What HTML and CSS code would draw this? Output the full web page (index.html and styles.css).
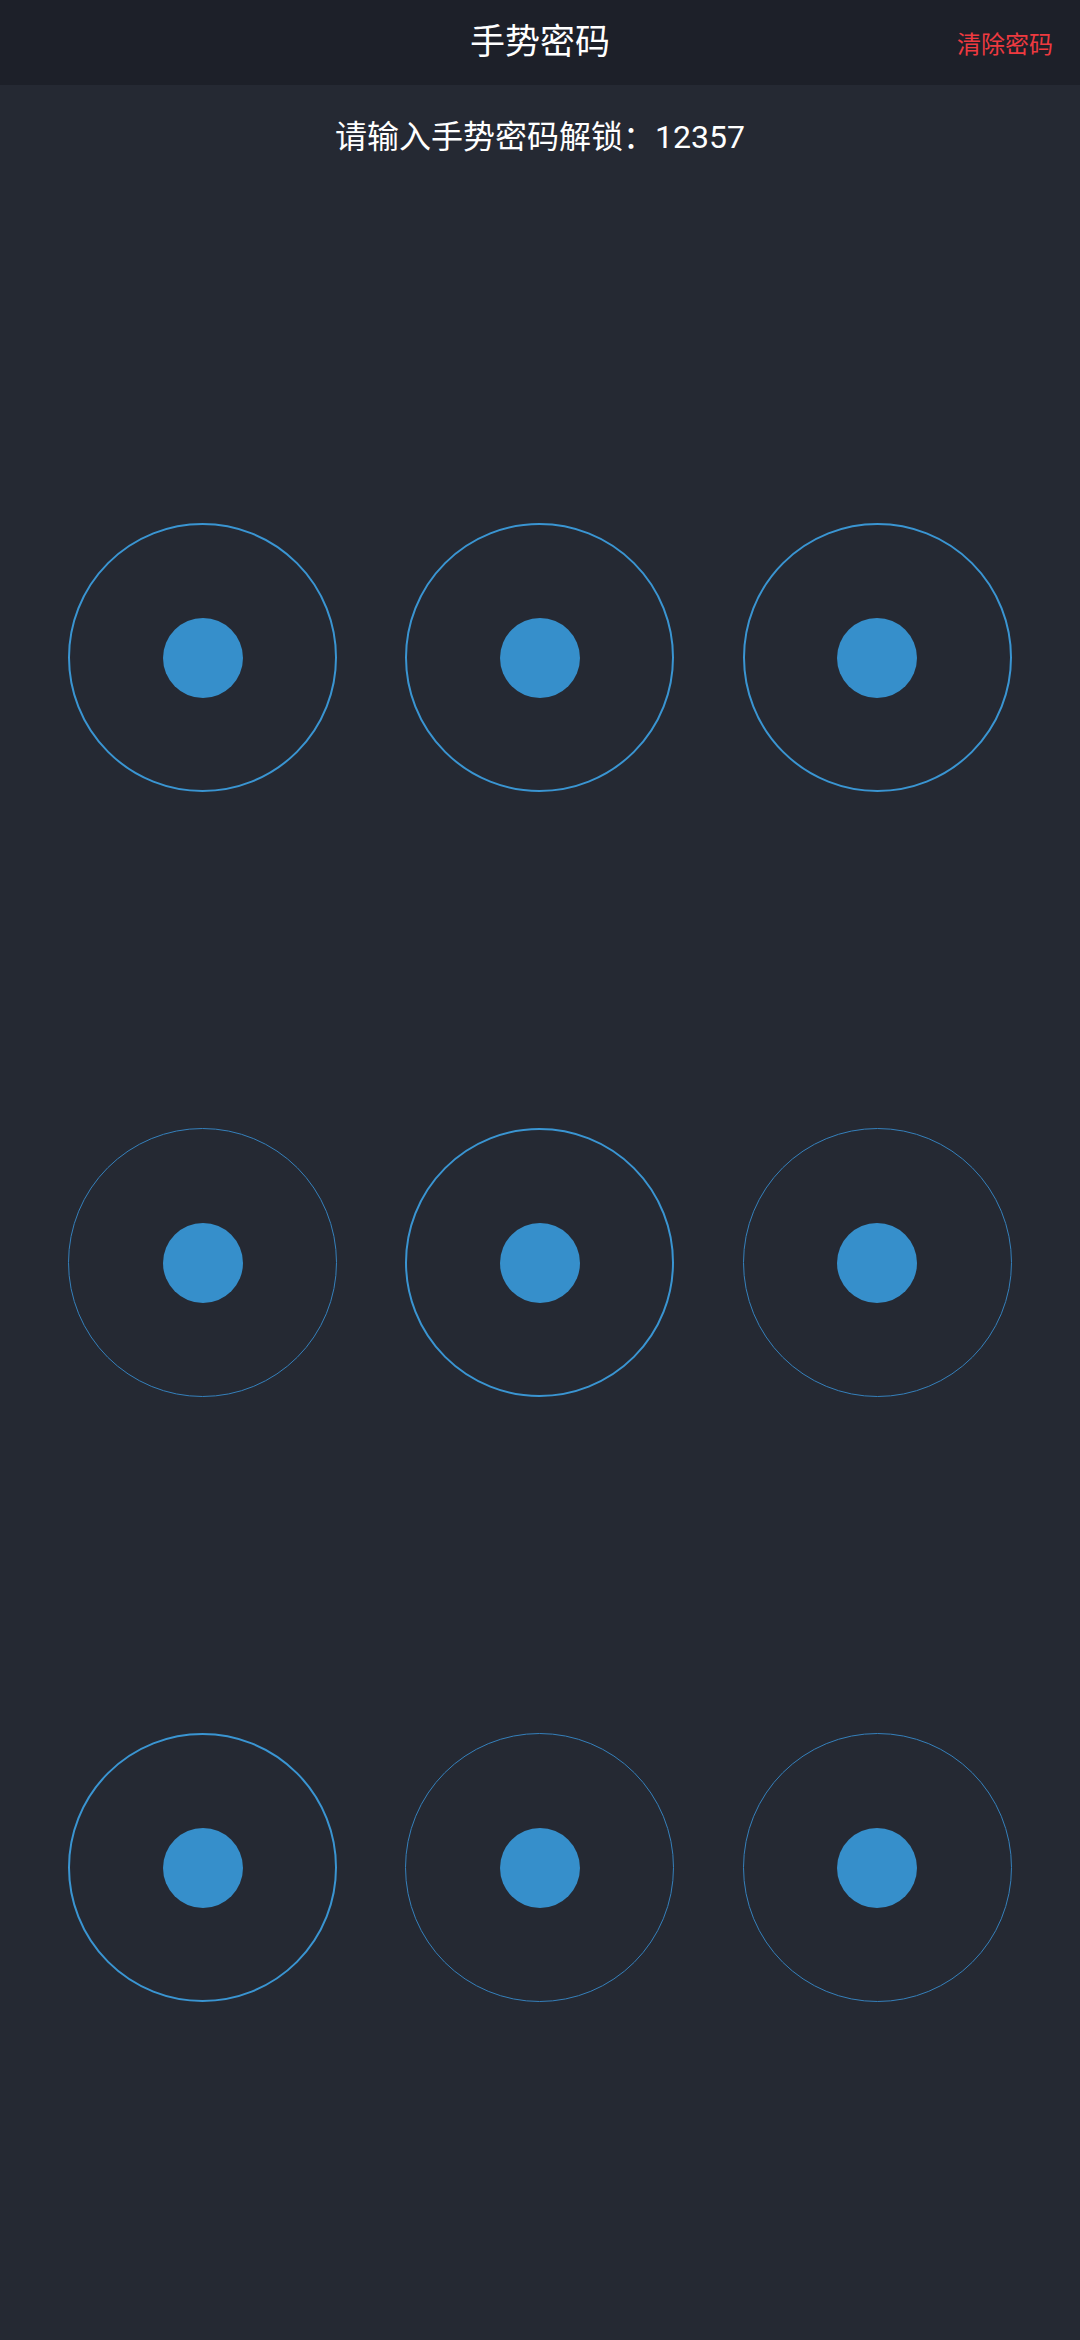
FILE: index.html
```html
<!DOCTYPE html>
<html lang="zh">
<head>
<meta charset="utf-8">
<title>手势密码</title>
<link rel="stylesheet" href="styles.css">
</head>
<body>
<div class="page">
  <header class="topbar">
    <h1 class="title">手势密码</h1>
    <span class="clear">清除密码</span>
  </header>
  <p class="hint">请输入手势密码解锁：12357</p>
  <div class="pad">
    <div class="cell"><div class="ring on"><div class="dot"></div></div></div>
    <div class="cell"><div class="ring on"><div class="dot"></div></div></div>
    <div class="cell"><div class="ring on"><div class="dot"></div></div></div>
    <div class="cell"><div class="ring"><div class="dot"></div></div></div>
    <div class="cell"><div class="ring on"><div class="dot"></div></div></div>
    <div class="cell"><div class="ring"><div class="dot"></div></div></div>
    <div class="cell"><div class="ring on"><div class="dot"></div></div></div>
    <div class="cell"><div class="ring"><div class="dot"></div></div></div>
    <div class="cell"><div class="ring"><div class="dot"></div></div></div>
  </div>
</div>
</body>
</html>
```

FILE: styles.css
```css
html, body {
  margin: 0;
  padding: 0;
  background: #252933;
}
body {
  font-family: Roboto, "Noto Sans CJK SC", "Noto Sans", sans-serif;
  color: #ffffff;
}
.page {
  width: 1080px;
  height: 2340px;
  background: #252933;
}
.topbar {
  position: relative;
  height: 85px;
  background: #1d2029;
  display: flex;
  align-items: center;
  justify-content: center;
}
.title {
  margin: 0;
  font-size: 35px;
  font-weight: 400;
  color: #ffffff;
  line-height: 1;
}
.clear {
  position: absolute;
  right: 27px;
  top: 0;
  bottom: 0;
  display: flex;
  align-items: center;
  font-size: 24px;
  color: #ee3a40;
}
.hint {
  margin: 0;
  padding-top: 31px;
  height: 42px;
  line-height: 42px;
  text-align: center;
  font-size: 32px;
}
.pad {
  display: grid;
  grid-template-columns: repeat(3, 1fr);
  row-gap: 336px;
  padding: 365px 34px 0;
}
.cell {
  display: flex;
  justify-content: center;
}
.ring {
  box-sizing: border-box;
  width: 269px;
  height: 269px;
  border-radius: 50%;
  border: 1.5px solid #3580bb;
  display: flex;
  align-items: center;
  justify-content: center;
}
.ring.on {
  border: 2.5px solid #3a95d2;
}
.dot {
  width: 80px;
  height: 80px;
  border-radius: 50%;
  background: #368fcb;
}
```
